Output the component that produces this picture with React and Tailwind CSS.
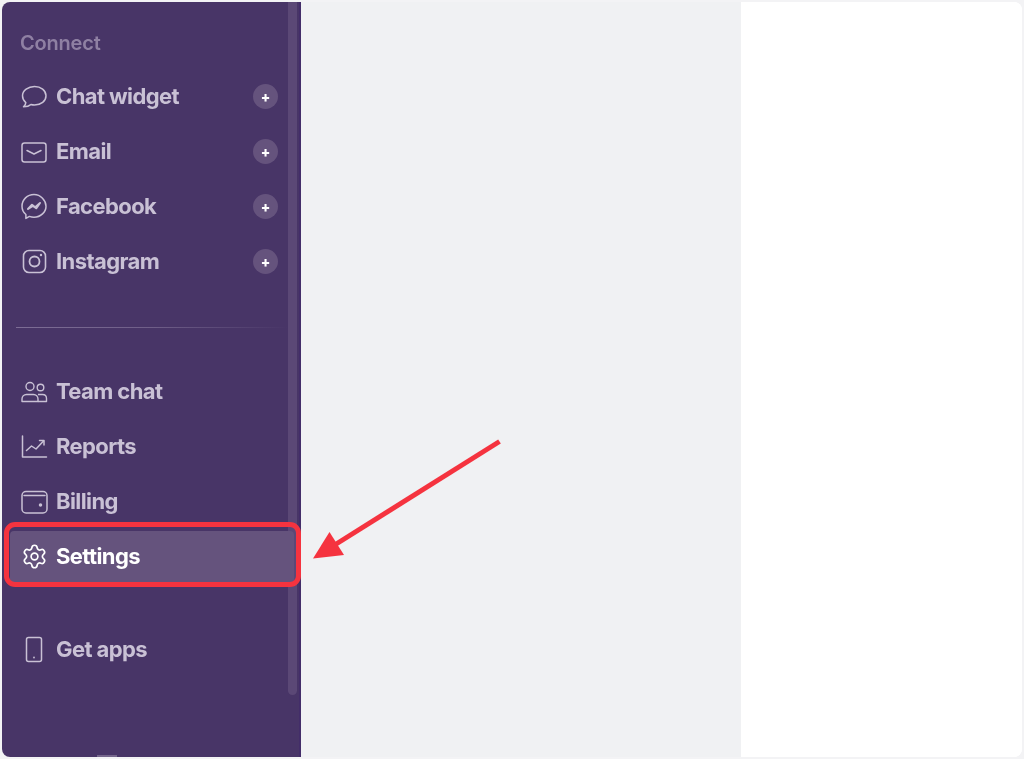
import { Settings } from 'lucide-react'

const ChatIcon = () => (
  <svg width="28" height="28" viewBox="0 0 28 28" fill="none" stroke="currentColor" strokeWidth="1.5" strokeLinejoin="round">
    <path d="M14.500 3.500c6.300 0 11.500 4 11.500 9.300s-5 9.200-11.500 9.200c-1.300 0-2.500-.2-3.600-.5-1.600 1.500-4 2.300-7.400 2.300 1.400-1.300 2.200-2.700 2.300-4.200C3.800 18 2.500 15.600 2.500 12.800c0-5.300 5.700-9.300 12-9.300z" />
  </svg>
)

const MailIcon = () => (
  <svg width="28" height="28" viewBox="0 0 28 28" fill="none" stroke="currentColor" strokeWidth="1.5" strokeLinecap="round" strokeLinejoin="round">
    <rect x="2" y="5" width="24" height="19" rx="2.500" />
    <path d="M7 12.500l7 3.500 7-3.500" />
  </svg>
)

const MessengerIcon = () => (
  <svg width="28" height="28" viewBox="0 0 28 28" fill="none" stroke="currentColor" strokeWidth="1.5" strokeLinecap="round" strokeLinejoin="round">
    <path d="M14 1.500C7.300 1.500 2 6.600 2 13.200c0 3.400 1.500 6.300 3.900 8.300v3.900l3.500-2c1.400.5 3 .8 4.600.8 6.700 0 12-5.200 12-11S20.700 1.500 14 1.500z" />
    <path d="M8 16l4-4.300 3.200 2.600L20 10l-3.800 5.300-3.300-2.400z" strokeWidth="2" />
  </svg>
)

const InstagramIcon = () => (
  <svg width="28" height="28" viewBox="0 0 28 28" fill="none" stroke="currentColor" strokeWidth="1.6">
    <rect x="3.500" y="2.500" width="22" height="22" rx="5.500" />
    <circle cx="14.500" cy="13.500" r="5" strokeWidth="1.800" />
    <circle cx="21" cy="7" r="1.200" fill="currentColor" stroke="none" />
  </svg>
)

const TeamIcon = () => (
  <svg width="28" height="28" viewBox="0 0 28 28" fill="none" stroke="currentColor" strokeWidth="1.4" strokeLinejoin="round">
    <circle cx="10" cy="8.500" r="4" />
    <path d="M2 23.500v-2.500c0-2.500 2-4.500 4.500-4.500h7c2.500 0 4.500 2 4.500 4.500v2.500z" />
    <circle cx="20.500" cy="9.500" r="3.300" />
    <path d="M18 16.500h4.500c2.500 0 4 1.800 4 4v3H18" />
  </svg>
)

const ChartIcon = () => (
  <svg width="28" height="28" viewBox="0 0 28 28" fill="none" stroke="currentColor" strokeWidth="1.5" strokeLinecap="round" strokeLinejoin="round">
    <path d="M2.500 3v21h24" />
    <path d="M6.500 17.500l5-4.500 4.500 3 7.500-8" />
    <path d="M19.500 7.500h4.500v4.500" />
  </svg>
)

const WalletIcon = () => (
  <svg width="28" height="28" viewBox="0 0 28 28" fill="none" stroke="currentColor" strokeWidth="1.5" strokeLinecap="round" strokeLinejoin="round">
    <rect x="2" y="3.500" width="25" height="21.500" rx="4" />
    <path d="M4 7.500h21" />
    <circle cx="20.500" cy="17" r="1" fill="currentColor" />
  </svg>
)

const PhoneIcon = () => (
  <svg width="28" height="28" viewBox="0 0 28 28" fill="none" stroke="currentColor" strokeWidth="1.5" strokeLinejoin="round">
    <rect x="6.500" y="1.500" width="15" height="24" rx="2" />
    <circle cx="14" cy="21.500" r="0.900" fill="currentColor" stroke="none" />
  </svg>
)

const connectItems = [
  { label: 'Chat widget', icon: <ChatIcon /> },
  { label: 'Email', icon: <MailIcon /> },
  { label: 'Facebook', icon: <MessengerIcon /> },
  { label: 'Instagram', icon: <InstagramIcon /> },
]

const toolItems = [
  { label: 'Team chat', icon: <TeamIcon /> },
  { label: 'Reports', icon: <ChartIcon /> },
  { label: 'Billing', icon: <WalletIcon /> },
]

function NavRow({ item, action, active }) {
  return (
    <div className={`flex h-[55px] items-center pr-[5px] pl-[8px] ${active ? 'text-white' : 'text-[#c9c1d5]'}`}>
      <div className={`flex h-[52px] flex-1 items-center gap-[8px] rounded-[4px] pr-[16px] pl-[10px] ${active ? 'bg-[#65537d]' : ''}`}>
        <span className="flex w-[28px] items-center justify-center">{item.icon}</span>
        <span className="text-[22px] font-bold tracking-[-0.6px]">{item.label}</span>
        {action && (
          <span className="ml-auto flex h-[25px] w-[25px] items-center justify-center rounded-full bg-[#65537d] text-[14px] leading-none font-extrabold text-white">
            +
          </span>
        )}
      </div>
    </div>
  )
}

export default function App() {
  return (
    <div className="relative h-[759px] w-[1024px] overflow-hidden bg-[#f3f3f5] p-[2px] font-['Inter',sans-serif]">
      <div className="flex h-[755px] overflow-hidden rounded-[8px] bg-white">
        <aside className="relative h-full w-[299px] border-r-2 border-[#432d69] bg-[#483567]">
          <div className="absolute top-0 right-[2px] h-[693px] w-[9px] rounded-b-[5px] bg-[#5b4876]" />
          <div className="absolute bottom-0 left-[95px] h-[2px] w-[20px] bg-[#75668c]" />

          <div className="relative blur-[0.35px]">
            <h2 className="flex h-[66px] items-end pb-[10px] pl-[18px] text-[20px] font-semibold tracking-[-0.2px] text-[#8f80a3]">
              Connect
            </h2>
            <div className="pt-[1px]">
              {connectItems.map((item) => (
                <NavRow key={item.label} item={item} action />
              ))}
            </div>

            <div className="mt-[38px] ml-[14px] h-[1px] w-[272px] bg-gradient-to-r from-[#7d6d95] via-[#6f5e88] to-[#483567]" />

            <div className="pt-[36px]">
              {toolItems.map((item) => (
                <NavRow key={item.label} item={item} />
              ))}
              <NavRow item={{ label: 'Settings', icon: <Settings size={27} strokeWidth={1.5} /> }} active />
            </div>

            <div className="pt-[38px]">
              <NavRow item={{ label: 'Get apps', icon: <PhoneIcon /> }} />
            </div>
          </div>
        </aside>

        <main className="h-full w-[440px] bg-[#f0f1f3]" />
        <div className="flex-1 bg-white" />
      </div>

      {/* annotation */}
      <div className="absolute top-[522px] left-[4px] h-[65px] w-[297px] rounded-[11px] border-[5px] border-[#f5333f]" />
      <svg className="absolute top-0 left-0" width="1024" height="759" fill="none">
        <path d="M499.500 441.500L333 546" stroke="#f5333f" strokeWidth="5" />
        <path d="M313 558.500L329.500 532L344 555z" fill="#f5333f" />
      </svg>
    </div>
  )
}
